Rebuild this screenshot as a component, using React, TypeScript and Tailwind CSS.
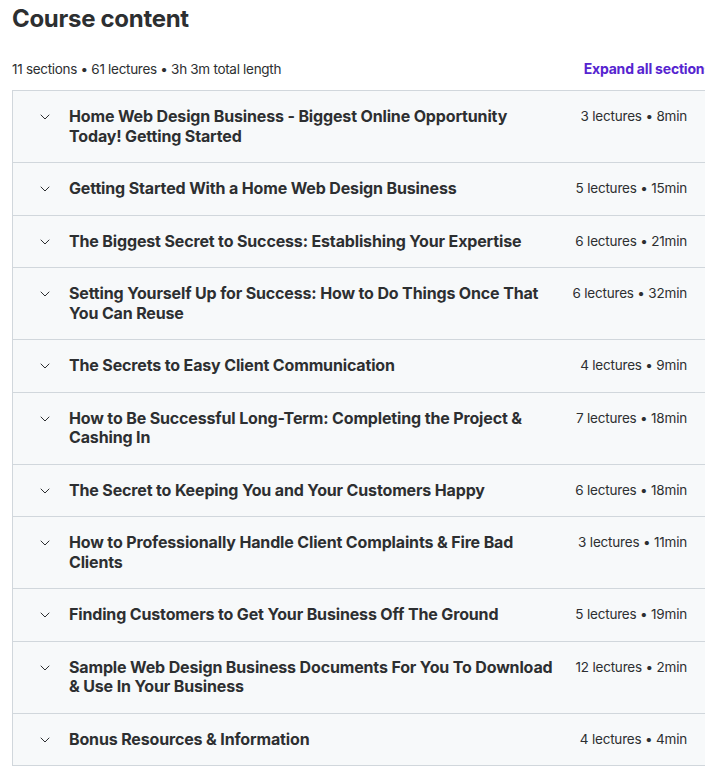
import React from 'react';
import { ChevronDown } from 'lucide-react';

const sections = [
  { title: 'Home Web Design Business - Biggest Online Opportunity Today! Getting Started', meta: '3 lectures • 8min' },
  { title: 'Getting Started With a Home Web Design Business', meta: '5 lectures • 15min' },
  { title: 'The Biggest Secret to Success: Establishing Your Expertise', meta: '6 lectures • 21min' },
  { title: 'Setting Yourself Up for Success: How to Do Things Once That You Can Reuse', meta: '6 lectures • 32min' },
  { title: 'The Secrets to Easy Client Communication', meta: '4 lectures • 9min' },
  { title: 'How to Be Successful Long-Term: Completing the Project & Cashing In', meta: '7 lectures • 18min' },
  { title: 'The Secret to Keeping You and Your Customers Happy', meta: '6 lectures • 18min' },
  { title: 'How to Professionally Handle Client Complaints & Fire Bad Clients', meta: '3 lectures • 11min' },
  { title: 'Finding Customers to Get Your Business Off The Ground', meta: '5 lectures • 19min' },
  { title: 'Sample Web Design Business Documents For You To Download & Use In Your Business', meta: '12 lectures • 2min' },
  { title: 'Bonus Resources & Information', meta: '4 lectures • 4min' },
];

export default function App() {
  return (
    <div className="w-[705px] h-[766px] overflow-hidden bg-white text-[#2d2f31] font-['Inter',sans-serif]">
      <div className="ml-[12px] w-[700px]">
        <h2 className="pt-[4px] text-[24px] leading-[30px] font-bold tracking-[-0.3px]">Course content</h2>

        {/* Summary line */}
        <div className="mt-[25px] flex items-center justify-between text-[14px] leading-[20px]">
          <span className="text-[13.5px] tracking-[-0.3px]">11 sections • 61 lectures • 3h 3m total length</span>
          <span className="font-bold text-[#5624d0] whitespace-nowrap tracking-[-0.2px] cursor-pointer">
            Expand all sections
          </span>
        </div>

        {/* Section list */}
        <div className="mt-[11px] border border-[#d1d7dc]">
          {sections.map((s, i) => (
            <div
              key={i}
              className={`flex items-start bg-[#f7f9fa] px-6 py-4 ${i > 0 ? 'border-t border-[#d1d7dc]' : ''}`}
            >
              <ChevronDown className="mt-[2px] h-4 w-4 shrink-0 text-[#2d2f31]" strokeWidth={1.5} />
              <div className="ml-4 flex-1 text-[16px] leading-[19.5px] font-bold tracking-[-0.15px]">{s.title}</div>
              <div className="ml-5 shrink-0 text-[13.5px] leading-[19.5px] tracking-[-0.2px]">{s.meta}</div>
            </div>
          ))}
        </div>
      </div>
    </div>
  );
}
